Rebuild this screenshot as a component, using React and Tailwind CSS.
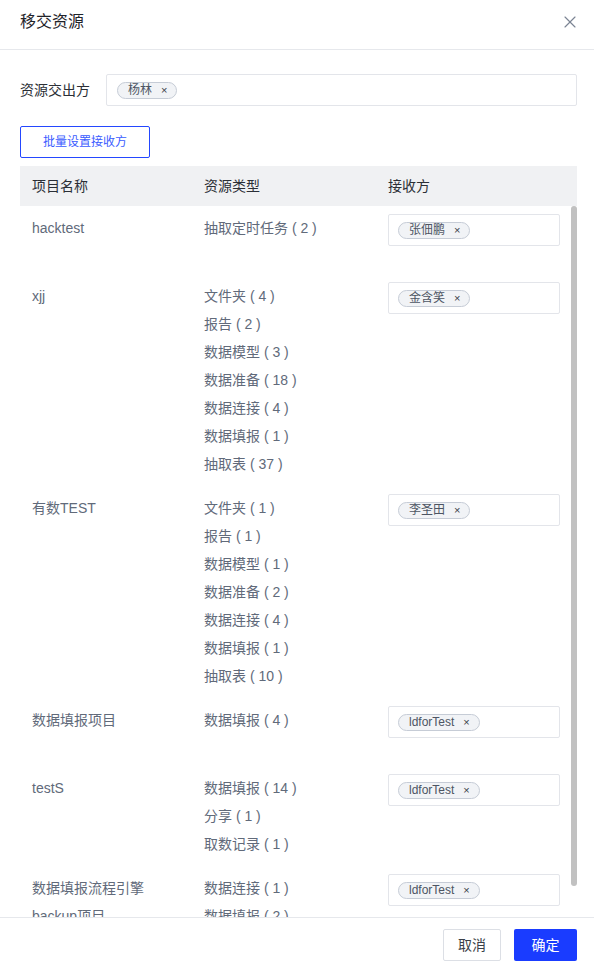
import { X } from "lucide-react";

const rows = [
  { name: "hacktest", types: ["抽取定时任务 ( 2 )"], receiver: "张佃鹏" },
  {
    name: "xjj",
    types: ["文件夹 ( 4 )", "报告 ( 2 )", "数据模型 ( 3 )", "数据准备 ( 18 )", "数据连接 ( 4 )", "数据填报 ( 1 )", "抽取表 ( 37 )"],
    receiver: "金含笑"
  },
  {
    name: "有数TEST",
    types: ["文件夹 ( 1 )", "报告 ( 1 )", "数据模型 ( 1 )", "数据准备 ( 2 )", "数据连接 ( 4 )", "数据填报 ( 1 )", "抽取表 ( 10 )"],
    receiver: "李圣田"
  },
  { name: "数据填报项目", types: ["数据填报 ( 4 )"], receiver: "ldforTest" },
  { name: "testS", types: ["数据填报 ( 14 )", "分享 ( 1 )", "取数记录 ( 1 )"], receiver: "ldforTest" },
  { name: "数据填报流程引擎 backup项目", types: ["数据连接 ( 1 )", "数据填报 ( 2 )"], receiver: "ldforTest" }
];

function Tag({ label }) {
  return (
    <span className="inline-flex h-[17px] items-center gap-[9px] rounded-full border border-[#c6ccd6] bg-[#f1f3f6] pl-[10px] pr-[9px] text-[12px] leading-none text-[#4d5563]">
      {label}
      <span className="text-[11px] text-[#3a3f48]">×</span>
    </span>
  );
}

function ResourceRow({ row }) {
  return (
    <div className="flex text-[14px] leading-[28px] text-[#616a7a]">
      <div className="w-[172px] py-2 pl-3 pr-2">{row.name}</div>
      <div className="w-[184px] py-2 pl-3">
        {row.types.map((type) => (
          <div key={type} className="whitespace-pre">{type}</div>
        ))}
      </div>
      <div className="flex-1 pb-7 pl-3 pr-[17px] pt-2">
        <div className="flex h-8 items-center rounded-[2px] border border-[#e3e5ea] bg-white pl-[9px]">
          <Tag label={row.receiver} />
        </div>
      </div>
    </div>
  );
}

export default function App() {
  return (
    <div
      className="flex h-[972px] w-[594px] flex-col bg-white"
      style={{ fontFamily: '"Liberation Sans", "Noto Sans CJK SC", sans-serif' }}
    >
      <div className="flex h-[50px] shrink-0 items-start justify-between border-b border-[#e6e8ec] pl-5 pr-[14px] pt-[11px]">
        <h2 className="text-[16px] leading-[22px] text-[#1f2329]">移交资源</h2>
        <button className="mt-px text-[#7b8494]">
          <X size={20} strokeWidth={1.4} />
        </button>
      </div>

      <div className="flex min-h-0 flex-1 flex-col pl-5 pr-[17px]">
        <div className="mt-6 flex items-center">
          <label className="w-[86px] text-[14px] text-[#2b2f36]">资源交出方</label>
          <div className="flex h-8 flex-1 items-center rounded-[2px] border border-[#e3e5ea] pl-[10px]">
            <Tag label="杨林" />
          </div>
        </div>

        <button className="mt-5 h-8 w-[130px] rounded-[2px] border border-[#2447ff] text-[12px] text-[#3a5bff]">
          批量设置接收方
        </button>

        <div className="mt-2 flex h-10 shrink-0 items-center bg-[#f0f1f3] text-[14px] text-[#2b2f36]">
          <div className="w-[172px] pl-3">项目名称</div>
          <div className="w-[184px] pl-3">资源类型</div>
          <div className="flex-1 pl-3">接收方</div>
        </div>

        <div className="relative min-h-0 flex-1 overflow-hidden">
          {rows.map((row) => (
            <ResourceRow key={row.name} row={row} />
          ))}
          <div className="absolute right-0 top-0 h-[680px] w-[6px] rounded-[3px] bg-[#c1c1c1]" />
        </div>
      </div>

      <div className="flex h-[55px] shrink-0 items-start justify-end gap-[13px] border-t border-[#e6e8ec] pr-[17px] pt-[11px]">
        <button className="h-8 w-[58px] rounded-[2px] border border-[#dcdfe5] bg-white text-[14px] text-[#3a3f48]">
          取消
        </button>
        <button className="h-8 w-[63px] rounded-[2px] bg-[#1a3cff] text-[14px] text-white">确定</button>
      </div>
    </div>
  );
}
